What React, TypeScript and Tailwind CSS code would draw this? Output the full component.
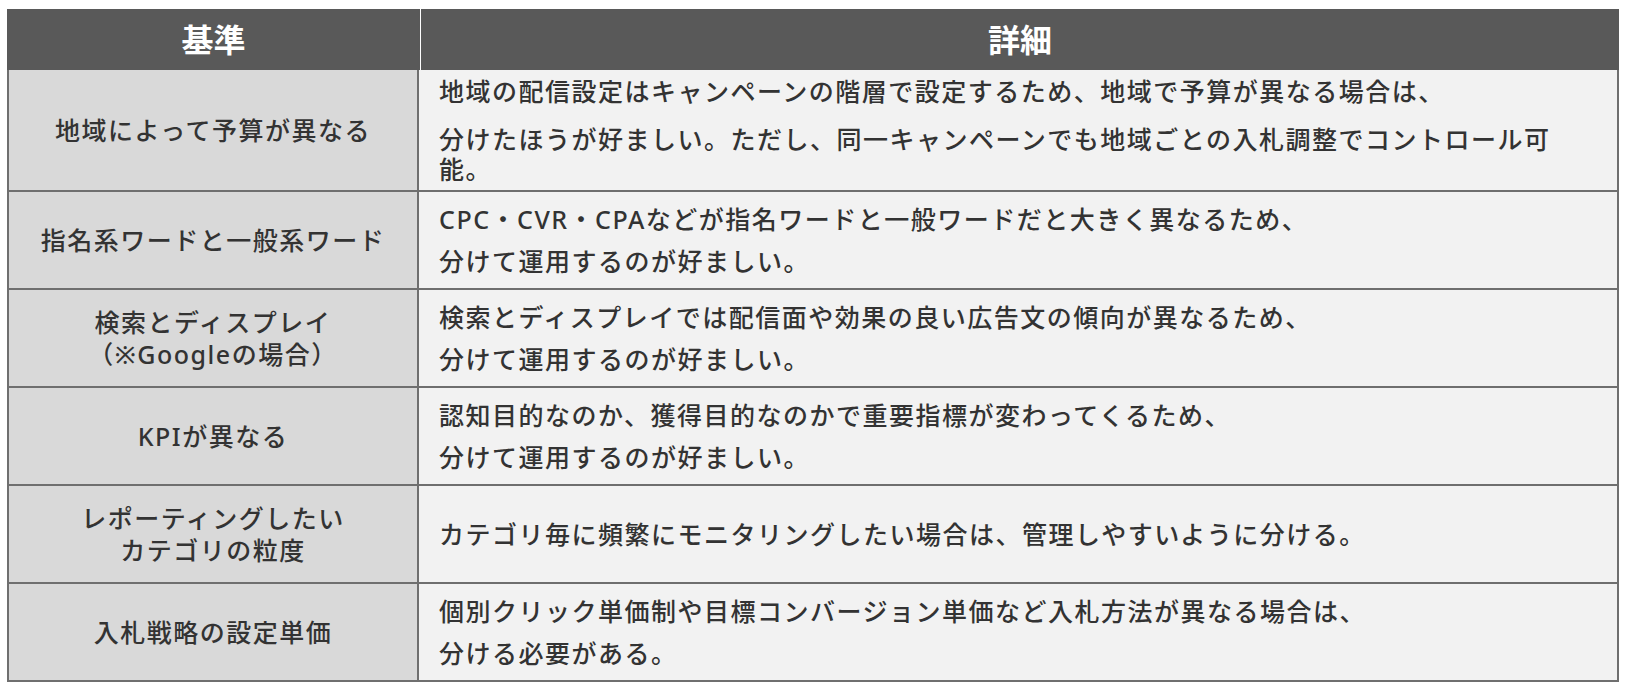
import React from "react";

type Row = { label: string[]; detail: string[][]; h: string; gap: string };

const rows: Row[] = [
  {
    label: ["地域によって予算が異なる"],
    detail: [
      ["地域の配信設定はキャンペーンの階層で設定するため、地域で予算が異なる場合は、"],
      ["分けたほうが好ましい。ただし、同一キャンペーンでも地域ごとの入札調整でコントロール可", "能。"],
    ],
    h: "h-[120px]",
    gap: "mt-[18px]",
  },
  {
    label: ["指名系ワードと一般系ワード"],
    detail: [["CPC・CVR・CPAなどが指名ワードと一般ワードだと大きく異なるため、"], ["分けて運用するのが好ましい。"]],
    h: "h-[98px]",
    gap: "mt-[12px]",
  },
  {
    label: ["検索とディスプレイ", "（※Googleの場合）"],
    detail: [["検索とディスプレイでは配信面や効果の良い広告文の傾向が異なるため、"], ["分けて運用するのが好ましい。"]],
    h: "h-[98px]",
    gap: "mt-[12px]",
  },
  {
    label: ["KPIが異なる"],
    detail: [["認知目的なのか、獲得目的なのかで重要指標が変わってくるため、"], ["分けて運用するのが好ましい。"]],
    h: "h-[98px]",
    gap: "mt-[12px]",
  },
  {
    label: ["レポーティングしたい", "カテゴリの粒度"],
    detail: [["カテゴリ毎に頻繁にモニタリングしたい場合は、管理しやすいように分ける。"]],
    h: "h-[98px]",
    gap: "mt-[12px]",
  },
  {
    label: ["入札戦略の設定単価"],
    detail: [["個別クリック単価制や目標コンバージョン単価など入札方法が異なる場合は、"], ["分ける必要がある。"]],
    h: "h-[98px]",
    gap: "mt-[12px]",
  },
];

export default function App() {
  return (
    <div
      className="w-[1626px] h-[694px] bg-white pt-[9px] pl-[7px]"
      style={{ fontFamily: '"Noto Sans", "Noto Sans CJK JP", sans-serif' }}
    >
      <div className="w-[1612px] border-2 border-t-0 border-[#6f6f6f] flex flex-col">
        <div className="h-[61px] bg-[#595959] flex text-white font-bold text-[32px] -mx-[2px]">
          <div className="w-[414px] flex items-center justify-center border-r border-white">基準</div>
          <div className="flex-1 flex items-center justify-center">詳細</div>
        </div>
        {rows.map((r, i) => (
          <div key={i} className={`flex ${r.h} ${i === 0 ? "" : "border-t-2 border-[#6f6f6f]"}`}>
            <div className="w-[410px] shrink-0 bg-[#d9d9d9] border-r-2 border-[#6f6f6f] flex flex-col items-center justify-center text-center text-[#333333] text-[25px] font-medium leading-[32px] tracking-[1.5px]">
              {r.label.map((l, j) => (
                <div key={j}>{l}</div>
              ))}
            </div>
            <div className="flex-1 bg-[#f2f2f2] pl-[20px] flex flex-col justify-center text-[#333333] text-[25px] font-medium leading-[30px] tracking-[1.5px]">
              {r.detail.map((p, j) => (
                <div key={j} className={j === 0 ? "" : r.gap}>
                  {p.map((l, k) => (
                    <div key={k}>{l}</div>
                  ))}
                </div>
              ))}
            </div>
          </div>
        ))}
      </div>
    </div>
  );
}
